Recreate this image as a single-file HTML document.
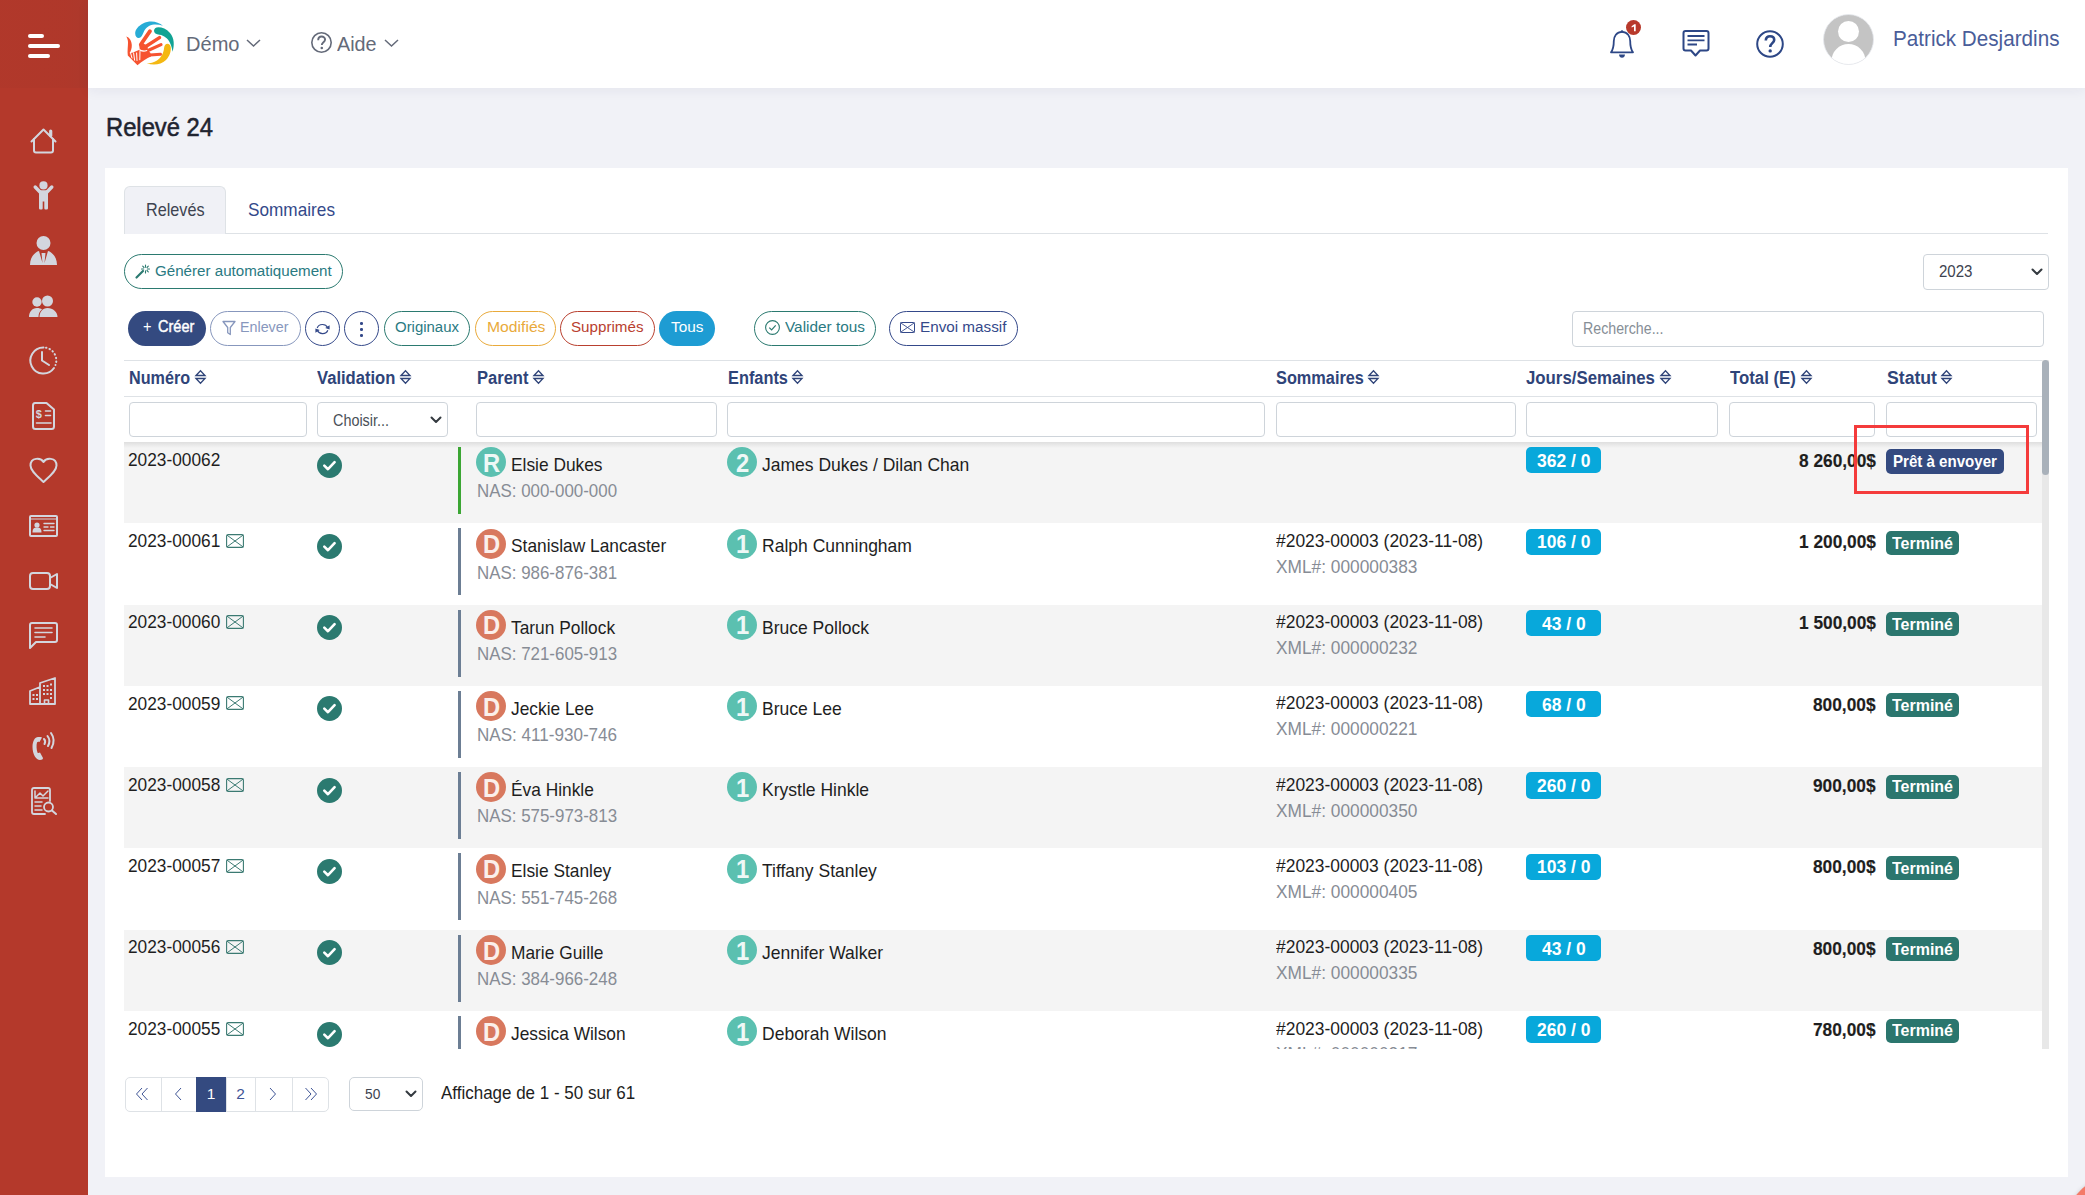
<!DOCTYPE html><html><head><meta charset="utf-8"><style>
html,body{margin:0;padding:0;}
body{width:2085px;height:1195px;overflow:hidden;position:relative;background:#f1f2f7;font-family:"Liberation Sans",sans-serif;}
svg{display:block;overflow:visible}
</style></head><body>
<div style="position:absolute;left:0px;top:0px;width:88px;height:1195px;background:#b4392b;"></div>
<div style="position:absolute;left:0px;top:0px;width:88px;height:88px;background:linear-gradient(90deg,rgba(40,20,20,0.025) 0%,rgba(40,20,20,0.03) 75%,rgba(60,60,60,0.06) 100%);"></div>
<div style="position:absolute;left:28px;top:34px;width:16px;height:4px;background:#fff;border-radius:2px;"></div>
<div style="position:absolute;left:28px;top:44px;width:32px;height:4px;background:#fff;border-radius:2px;"></div>
<div style="position:absolute;left:28px;top:54px;width:22px;height:4px;background:#fff;border-radius:2px;"></div>
<svg style="position:absolute;left:30px;top:128px;" width="27" height="26" viewBox="0 0 27 26"><path fill="none" stroke="#d3d6de" stroke-linejoin="round" stroke-linecap="round" stroke-width="2" d="M1.5 13.5 L13.5 1.5 L25.5 13.5"/><path fill="none" stroke="#d3d6de" stroke-linejoin="round" stroke-linecap="round" stroke-width="2" d="M4 11 V22.5 Q4 24.5 6 24.5 H21 Q23 24.5 23 22.5 V11"/><path fill="none" stroke="#d3d6de" stroke-linejoin="round" stroke-linecap="round" stroke-width="3.2" d="M20.7 3 V7.5"/></svg>
<svg style="position:absolute;left:33px;top:181px;" width="21" height="29" viewBox="0 0 21 29"><circle fill="#d3d6de" cx="10.5" cy="4.4" r="4.1"/><path fill="none" stroke="#d3d6de" stroke-linejoin="round" stroke-linecap="round" stroke-width="3.4" d="M2.2 6 L7 11 M18.8 6 L14 11"/><path fill="#d3d6de" d="M6 10.5 Q6 9.3 7.5 9.3 H13.5 Q15 9.3 15 10.5 V27.3 Q15 28.6 13.7 28.6 H12.4 Q11.3 28.6 11.3 27.3 V20.5 H9.7 V27.3 Q9.7 28.6 8.6 28.6 H7.3 Q6 28.6 6 27.3 Z"/></svg>
<svg style="position:absolute;left:30px;top:236px;" width="27" height="29" viewBox="0 0 27 29"><circle fill="#d3d6de" cx="13.5" cy="7" r="7"/><path fill="#d3d6de" d="M0 29 C0 21 5 16 9 15 L12.5 27 L11.5 17 H15.5 L14.5 27 L18 15 C22 16 27 21 27 29 Z"/></svg>
<svg style="position:absolute;left:29px;top:295px;" width="29" height="22" viewBox="0 0 29 22"><circle fill="#d3d6de" cx="8" cy="7" r="4.7"/><circle fill="#d3d6de" cx="18.5" cy="6" r="5.5"/><path fill="#d3d6de" d="M0 22 C0 17 3 13 8 13 C10 13 12 13.5 13 14.5 C10.5 16 9.5 19 9.5 22 Z"/><path fill="#d3d6de" d="M10.5 22 C10.5 17 13.5 13 18.5 13 C24 13 28.5 17 28.5 22 Z"/></svg>
<svg style="position:absolute;left:29px;top:346px;" width="29" height="29" viewBox="0 0 29 29"><path fill="none" stroke="#d3d6de" stroke-linejoin="round" stroke-linecap="round" stroke-width="2" d="M14.5 1.5 A13 13 0 1 0 25 22"/><path fill="none" stroke="#d3d6de" stroke-linejoin="round" stroke-linecap="round" stroke-width="2" stroke-dasharray="0.5 3.2" stroke-width="2.2" d="M17 1.7 A13 13 0 0 1 26.5 19"/><path fill="none" stroke="#d3d6de" stroke-linejoin="round" stroke-linecap="round" stroke-width="2" d="M13 6 V14.5 L20 19"/></svg>
<svg style="position:absolute;left:32px;top:402px;" width="23" height="28" viewBox="0 0 23 28"><path fill="none" stroke="#d3d6de" stroke-linejoin="round" stroke-linecap="round" stroke-width="2" d="M3 1 H14.5 L22 7.5 V24.5 Q22 27 19.5 27 H3.5 Q1 27 1 24.5 V3.5 Q1 1 3 1 Z"/><path fill="none" stroke="#d3d6de" stroke-linejoin="round" stroke-linecap="round" stroke-width="1.6" d="M13.5 9 H18.5 M13.5 13.5 H18.5 M4.5 21 H19"/><text x="6.8" y="16" font-size="11" font-weight="700" fill="#d3d6de" text-anchor="middle" font-family="Liberation Sans">$</text></svg>
<svg style="position:absolute;left:29px;top:457px;" width="29" height="26" viewBox="0 0 29 26"><path fill="none" stroke="#d3d6de" stroke-linejoin="round" stroke-linecap="round" stroke-width="2" d="M14.5 5 C12 0.5 1.5 0 1.5 8.5 C1.5 14 8 19 14.5 25 C21 19 27.5 14 27.5 8.5 C27.5 0 17 0.5 14.5 5 Z"/></svg>
<svg style="position:absolute;left:29px;top:515px;" width="29" height="22" viewBox="0 0 29 22"><rect fill="none" stroke="#d3d6de" stroke-linejoin="round" stroke-linecap="round" stroke-width="2" x="1" y="1" width="27" height="20" rx="1"/><path fill="none" stroke="#d3d6de" stroke-linejoin="round" stroke-linecap="round" stroke-width="1.2" d="M1 4 H28"/><circle fill="#d3d6de" cx="8" cy="10" r="2.6"/><path fill="#d3d6de" d="M3.5 17.5 C3.5 13.5 5 12.5 8 12.5 C11 12.5 12.5 13.5 12.5 17.5 Z"/><path fill="none" stroke="#d3d6de" stroke-linejoin="round" stroke-linecap="round" stroke-width="1.4" d="M15 8.5 H25 M15 12 H19 M21.5 12 H25 M15 15.5 H25"/></svg>
<svg style="position:absolute;left:29px;top:572px;" width="29" height="18" viewBox="0 0 29 18"><rect fill="none" stroke="#d3d6de" stroke-linejoin="round" stroke-linecap="round" stroke-width="2" x="1" y="1" width="20" height="16" rx="3"/><path fill="none" stroke="#d3d6de" stroke-linejoin="round" stroke-linecap="round" stroke-width="2" d="M21 6 L28 2 V16 L21 12"/></svg>
<svg style="position:absolute;left:29px;top:622px;" width="29" height="27" viewBox="0 0 29 27"><path fill="none" stroke="#d3d6de" stroke-linejoin="round" stroke-linecap="round" stroke-width="2" d="M3 1 H26 Q28 1 28 3 V18 Q28 20 26 20 H7 L1 26 V3 Q1 1 3 1 Z"/><path fill="none" stroke="#d3d6de" stroke-linejoin="round" stroke-linecap="round" stroke-width="1.6" d="M6 6 H23 M6 10.5 H23 M6 15 H16"/></svg>
<svg style="position:absolute;left:29px;top:677px;" width="27" height="28" viewBox="0 0 27 28"><path fill="none" stroke="#d3d6de" stroke-linejoin="round" stroke-linecap="round" stroke-width="1.8" d="M1 27 V14 L11 10 V27 M11 27 V6 L26 1 V27 Z M1 27 H26"/><path fill="none" stroke="#d3d6de" stroke-linejoin="round" stroke-linecap="round" stroke-width="1.6" d="M15.5 27 V23 H19.5 V27"/><g fill="#d3d6de"><rect x="3.5" y="17" width="2" height="2"/><rect x="7" y="17" width="2" height="2"/><rect x="3.5" y="21" width="2" height="2"/><rect x="7" y="21" width="2" height="2"/><rect x="14" y="8" width="2" height="2"/><rect x="17.5" y="8" width="2" height="2"/><rect x="21" y="6.5" width="2" height="2"/><rect x="14" y="12" width="2" height="2"/><rect x="17.5" y="12" width="2" height="2"/><rect x="21" y="12" width="2" height="2"/><rect x="14" y="16" width="2" height="2"/><rect x="17.5" y="16" width="2" height="2"/><rect x="21" y="16" width="2" height="2"/><rect x="21" y="20" width="2" height="2"/></g></svg>
<svg style="position:absolute;left:32px;top:732px;" width="23" height="28" viewBox="0 0 23 28"><path fill="#d3d6de" d="M6 5 C3 5 0.5 9 0.5 15 C0.5 22 4 28 8 28 C10 28 11 27 11 26 L8 20.5 C7 21 6 21.3 5.5 20.5 C4.5 18 4.2 13 5 10.5 C5.5 9.5 6.5 9.5 7.5 10 L10 5.5 C9.5 5 8 5 6 5 Z"/><path fill="none" stroke="#d3d6de" stroke-linejoin="round" stroke-linecap="round" stroke-width="2" d="M12 7 Q14 9 12.5 12 M15.5 4 Q19 8.5 16 14 M19 1 Q24 8 19.5 16"/></svg>
<svg style="position:absolute;left:31px;top:787px;" width="26" height="28" viewBox="0 0 26 28"><path fill="none" stroke="#d3d6de" stroke-linejoin="round" stroke-linecap="round" stroke-width="1.8" d="M14 27 H3 Q1 27 1 25 V3 Q1 1 3 1 H17 Q19 1 19 3 V14"/><path fill="none" stroke="#d3d6de" stroke-linejoin="round" stroke-linecap="round" stroke-width="1.5" d="M4 4 V11 H17 M5 10 L9 6 L12 9 L17 4 M4 15 H11 M4 19 H10 M4 23 H11"/><circle fill="none" stroke="#d3d6de" stroke-linejoin="round" stroke-linecap="round" stroke-width="1.8" cx="17.5" cy="20" r="4.5"/><path fill="none" stroke="#d3d6de" stroke-linejoin="round" stroke-linecap="round" stroke-width="2" d="M21 23.5 L25 27"/></svg>
<div style="position:absolute;left:88px;top:0px;width:1997px;height:88px;background:#fff;box-shadow:0 3px 12px rgba(30,40,80,0.06);"></div>
<svg style="position:absolute;left:125px;top:20px;" width="50" height="47" viewBox="0 0 50 47">
<path fill="#27acd6" d="M38 5.8 C33 1.5 25 0 18 3.5 C13 6 10 10 10.2 13.5 C10.3 16.5 12 18.3 14 18 C16 17.8 17 16 18.5 12.5 C20.5 8 24 5 29 4.6 C32 4.4 35 4.8 38 5.8 Z"/>
<path fill="#11a394" d="M47.5 31.8 C49.5 26 49.5 18 45 13 C41.5 9 37 7.3 33.5 7.3 C30.5 7.3 29 9 29 10.8 C29 13 31 14.3 34.5 14.8 C39 15.5 43 18.5 45 23 C46.5 26 47.2 29 47.5 31.8 Z"/>
<path fill="#f4b812" d="M21.7 43.3 C28 45.5 36 45 41 40 C45 36 46 31 45.8 27.5 C45.6 25 44 23.8 42.5 23.8 C40.5 23.8 39.3 25.5 39 28.5 C38.5 33 36.5 37.5 32 40.5 C29 42.5 25 43.3 21.7 43.3 Z"/>
<g stroke="#f65330" stroke-linecap="round" fill="none">
<path stroke-width="3.8" d="M15.8 24.5 L25 11.2"/>
<path stroke-width="3.5" d="M20 27 L34.5 17.6"/>
<path stroke-width="3.2" d="M23 30.5 L36 24.6"/>
<path stroke-width="3" d="M25 35 L35.5 34.3"/>
</g>
<path fill="#f65330" d="M1.2 16.5 C4.5 17.2 6.6 21 6.8 25 C7 28.5 5.6 31.5 4.6 33.2 L8 32.5 L14.5 29.8 C17.5 31.5 20.5 31.5 22.5 30 L25.5 33 L26 36.5 C24 37.5 21.5 38.6 19.5 40 C17 41.7 14.5 43.5 12.5 45.3 L2.8 35.5 C2.2 31 3 26.5 3 22.5 C3 20 2.3 18 1.2 16.5 Z"/>
<path fill="#f65330" d="M14.2 25.5 L17 22.5 L21 25 L23 28 L22 30.5 C19.5 31 17 30.5 14.8 29.6 Z"/>
<g stroke="#fff" stroke-width="1" stroke-linecap="round" fill="none">
<path d="M5.4 32.4 L7 38"/><path d="M8.6 33 L9.6 40.2"/><path d="M11.6 33 L12 40.5"/><path d="M15 31.2 L14.8 39.8"/>
<path stroke-width="1.1" d="M14.8 30 C17 31.4 19.5 31.6 21.8 30.6"/>
</g>
</svg>
<span style="position:absolute;left:185.50px;top:32.92px;font-size:21px;line-height:21px;font-weight:400;color:#646a79;transform:scaleX(0.9554);transform-origin:0 0;white-space:nowrap;">Démo</span>
<svg style="position:absolute;left:246px;top:39px;" width="15" height="8" viewBox="0 0 15 8"><path fill="none" stroke="#646a79" stroke-width="1.5" d="M1 1 L7.5 7 L14 1"/></svg>
<svg style="position:absolute;left:311px;top:32px;" width="21" height="21" viewBox="0 0 21 21"><circle cx="10.5" cy="10.5" r="9.7" fill="none" stroke="#646a79" stroke-width="1.6"/><path fill="none" stroke="#646a79" stroke-width="1.9" d="M7.2 8.2 C7.2 5.6 8.9 4.5 10.6 4.5 C12.6 4.5 14.1 5.8 14.1 7.6 C14.1 10.2 10.8 10.3 10.8 13"/><circle cx="10.8" cy="16" r="1.3" fill="#646a79"/></svg>
<span style="position:absolute;left:337.40px;top:32.92px;font-size:21px;line-height:21px;font-weight:400;color:#646a79;transform:scaleX(0.9417);transform-origin:0 0;white-space:nowrap;">Aide</span>
<svg style="position:absolute;left:384px;top:39px;" width="15" height="8" viewBox="0 0 15 8"><path fill="none" stroke="#646a79" stroke-width="1.5" d="M1 1 L7.5 7 L14 1"/></svg>
<svg style="position:absolute;left:1610px;top:30px;" width="24" height="28" viewBox="0 0 24 28"><path fill="none" stroke="#2d4786" stroke-width="1.8" stroke-linejoin="round" d="M12 1.8 C6.5 1.8 3.8 6.5 3.8 11 C3.8 17 2.8 20 1 22.3 H23 C21.2 20 20.2 17 20.2 11 C20.2 6.5 17.5 1.8 12 1.8 Z"/><path fill="#2d4786" d="M9 24.5 H15 C15 26.5 13.5 27.8 12 27.8 C10.5 27.8 9 26.5 9 24.5 Z"/><circle cx="12" cy="1.5" r="1.3" fill="#2d4786"/></svg>
<svg style="position:absolute;left:1626px;top:20px;" width="15" height="15" viewBox="0 0 15 15"><circle cx="7.5" cy="7.5" r="7.5" fill="#b8392b"/></svg>
<svg style="position:absolute;left:1626px;top:20px;" width="15" height="15" viewBox="0 0 15 15"><path fill="#fff" d="M5.6 6.2 L8.3 4.3 H9.7 V11.2 H8 V6.4 L5.6 7.6 Z"/></svg>
<svg style="position:absolute;left:1682px;top:30px;" width="28" height="27" viewBox="0 0 28 27"><path fill="none" stroke="#2d4786" stroke-width="2" stroke-linejoin="round" d="M3.5 1 H24.5 Q26.5 1 26.5 3 V18.5 Q26.5 20.5 24.5 20.5 H18 L13.5 25.5 L9 20.5 H3.5 Q1.5 20.5 1.5 18.5 V3 Q1.5 1 3.5 1 Z"/><path stroke="#2d4786" stroke-width="1.8" d="M5.5 6 H22.5 M5.5 10.3 H22.5 M5.5 14.5 H15"/></svg>
<svg style="position:absolute;left:1756px;top:30px;" width="28" height="28" viewBox="0 0 28 28"><circle cx="14" cy="14" r="12.8" fill="none" stroke="#2d4786" stroke-width="2"/><path fill="none" stroke="#2d4786" stroke-width="2.6" d="M9.8 10.4 C9.8 7.4 11.7 6.2 14 6.2 C16.5 6.2 18.2 7.7 18.2 9.9 C18.2 13.1 14.2 13.3 14.2 17"/><circle cx="14.2" cy="20.9" r="1.7" fill="#2d4786"/></svg>
<svg style="position:absolute;left:1823px;top:14px;" width="51" height="51" viewBox="0 0 51 51"><defs><clipPath id="avc"><circle cx="25.5" cy="25.5" r="25"/></clipPath></defs><circle cx="25.5" cy="25.5" r="25" fill="#c4c4c4"/><g clip-path="url(#avc)" fill="#fff"><circle cx="25.5" cy="17.5" r="10.5"/><ellipse cx="25.5" cy="47" rx="17" ry="17"/></g><circle cx="25.5" cy="25.5" r="25" fill="none" stroke="#e6e8ee" stroke-width="0.8"/></svg>
<span style="position:absolute;left:1892.50px;top:28.67px;font-size:21.3px;line-height:21.3px;font-weight:400;color:#4a5d99;transform:scaleX(0.9700);transform-origin:0 0;white-space:nowrap;">Patrick Desjardins</span>
<span style="position:absolute;left:106.00px;top:113.79px;font-size:26px;line-height:26px;font-weight:400;color:#1f2430;transform:scaleX(0.9137);transform-origin:0 0;white-space:nowrap;-webkit-text-stroke:0.55px #1f2430;">Relevé 24</span>
<div style="position:absolute;left:105px;top:168px;width:1963px;height:1009px;background:#fff;"></div>
<div style="position:absolute;left:124px;top:233px;width:1924px;height:1px;background:#dee2e6;"></div>
<div style="position:absolute;left:124px;top:186px;width:100px;height:47px;background:#f0f1f6;border:1px solid #dee2e6;border-bottom:none;border-radius:6px 6px 0 0;"></div>
<span style="position:absolute;left:145.50px;top:199.91px;font-size:19px;line-height:19px;font-weight:400;color:#3d4350;transform:scaleX(0.8521);transform-origin:0 0;white-space:nowrap;">Relevés</span>
<span style="position:absolute;left:248.00px;top:199.91px;font-size:19px;line-height:19px;font-weight:400;color:#34498a;transform:scaleX(0.9053);transform-origin:0 0;white-space:nowrap;">Sommaires</span>
<div style="position:absolute;left:124px;top:254px;width:217px;height:33px;border:1px solid #2b7a70;background:transparent;border-radius:17.5px;"></div>
<svg style="position:absolute;left:135px;top:264px;" width="15" height="15" viewBox="0 0 15 15"><path stroke="#2b7a70" stroke-width="2.2" stroke-linecap="round" d="M1.5 13.5 L8 7"/><g stroke="#2b7a70" stroke-width="1.1" stroke-linecap="round"><path d="M10.5 1 V3.2 M10.5 6.8 V9 M6.5 5 H8.7 M12.3 5 H14.5 M7.7 2.2 L9 3.5 M12 6.5 L13.3 7.8 M13.3 2.2 L12 3.5"/></g></svg>
<span style="position:absolute;left:154.50px;top:262.96px;font-size:15.4px;line-height:15.4px;font-weight:400;color:#2a7a82;transform:scaleX(0.9836);transform-origin:0 0;white-space:nowrap;">Générer automatiquement</span>
<div style="position:absolute;left:1923px;top:254px;width:124px;height:34px;border:1px solid #ced4da;border-radius:4px;background:#fff;"></div>
<span style="position:absolute;left:1939.00px;top:264.25px;font-size:16px;line-height:16px;font-weight:400;color:#3d4350;transform:scaleX(0.9410);transform-origin:0 0;white-space:nowrap;">2023</span>
<svg style="position:absolute;left:2031px;top:268px;" width="12" height="8" viewBox="0 0 12 8"><path fill="none" stroke="#343a40" stroke-width="2" stroke-linecap="round" stroke-linejoin="round" d="M1.5 1.5 L6 6 L10.5 1.5"/></svg>
<div style="position:absolute;left:128px;top:311px;width:78px;height:35px;background:#344a80;border-radius:17.5px;"></div>
<span style="position:absolute;left:142.50px;top:318.95px;font-size:16px;line-height:16px;font-weight:400;color:#fff;transform:scaleX(0.9091);transform-origin:0 0;white-space:nowrap;">+</span>
<span style="position:absolute;left:158.30px;top:318.92px;font-size:15.8px;line-height:15.8px;font-weight:400;color:#fff;transform:scaleX(0.9190);transform-origin:0 0;white-space:nowrap;-webkit-text-stroke:0.45px #fff;">Créer</span>
<div style="position:absolute;left:210px;top:311px;width:89px;height:33px;border:1px solid #8797bd;background:transparent;border-radius:17.5px;"></div>
<svg style="position:absolute;left:222px;top:320px;" width="14" height="16" viewBox="0 0 14 16"><path fill="none" stroke="#8797bd" stroke-width="1.3" stroke-linejoin="round" d="M1 1.5 H13 L8.3 7.5 V14.5 L5.7 12.8 V7.5 Z"/></svg>
<span style="position:absolute;left:240.00px;top:319.26px;font-size:15.4px;line-height:15.4px;font-weight:400;color:#8797bd;transform:scaleX(0.9291);transform-origin:0 0;white-space:nowrap;">Enlever</span>
<div style="position:absolute;left:305px;top:311px;width:33px;height:33px;border:1px solid #34498a;background:transparent;border-radius:17.5px;"></div>
<svg style="position:absolute;left:314px;top:322px;" width="17" height="14" viewBox="0 0 17 14"><path fill="none" stroke="#34498a" stroke-width="1.2" d="M3.2 6 A5.6 5.2 0 0 1 13.6 5.6 M13.8 8.2 A5.6 5.2 0 0 1 3.4 8.6"/><path fill="#34498a" d="M11.2 6 L15.6 7.6 L15.6 3.2 Z M5.8 8 L1.4 6.4 L1.4 10.8 Z"/></svg>
<div style="position:absolute;left:344px;top:311px;width:33px;height:33px;border:1px solid #34498a;background:transparent;border-radius:17.5px;"></div>
<div style="position:absolute;left:360.3px;top:322.3px;width:2.6px;height:2.6px;background:#34498a;border-radius:50%;"></div>
<div style="position:absolute;left:360.3px;top:328.3px;width:2.6px;height:2.6px;background:#34498a;border-radius:50%;"></div>
<div style="position:absolute;left:360.3px;top:334.3px;width:2.6px;height:2.6px;background:#34498a;border-radius:50%;"></div>
<div style="position:absolute;left:384px;top:311px;width:84px;height:33px;border:1px solid #2b7a70;background:transparent;border-radius:17.5px;"></div>
<span style="position:absolute;left:395.00px;top:319.26px;font-size:15.4px;line-height:15.4px;font-weight:400;color:#2a7a82;transform:scaleX(0.9712);transform-origin:0 0;white-space:nowrap;">Originaux</span>
<div style="position:absolute;left:475px;top:311px;width:79px;height:33px;border:1px solid #e9aa3b;background:transparent;border-radius:17.5px;"></div>
<span style="position:absolute;left:486.50px;top:319.26px;font-size:15.4px;line-height:15.4px;font-weight:400;color:#e9aa3b;transform:scaleX(1.0201);transform-origin:0 0;white-space:nowrap;">Modifiés</span>
<div style="position:absolute;left:560px;top:311px;width:93px;height:33px;border:1px solid #b9402f;background:transparent;border-radius:17.5px;"></div>
<span style="position:absolute;left:571.00px;top:319.26px;font-size:15.4px;line-height:15.4px;font-weight:400;color:#b9402f;transform:scaleX(0.9851);transform-origin:0 0;white-space:nowrap;">Supprimés</span>
<div style="position:absolute;left:659px;top:311px;width:56px;height:35px;background:#1e9cd3;border-radius:17.5px;"></div>
<span style="position:absolute;left:671.00px;top:319.26px;font-size:15.4px;line-height:15.4px;font-weight:400;color:#fff;transform:scaleX(0.9985);transform-origin:0 0;white-space:nowrap;">Tous</span>
<div style="position:absolute;left:754px;top:311px;width:120px;height:33px;border:1px solid #2b7a70;background:transparent;border-radius:17.5px;"></div>
<svg style="position:absolute;left:765px;top:320px;" width="15" height="15" viewBox="0 0 15 15"><circle cx="7.5" cy="7.5" r="6.9" fill="none" stroke="#2b7a70" stroke-width="1.1"/><path fill="none" stroke="#2b7a70" stroke-width="1.2" d="M4.3 7.6 L6.6 9.9 L10.7 5.3"/></svg>
<span style="position:absolute;left:785.00px;top:319.26px;font-size:15.4px;line-height:15.4px;font-weight:400;color:#2a7a82;transform:scaleX(0.9975);transform-origin:0 0;white-space:nowrap;">Valider tous</span>
<div style="position:absolute;left:889px;top:311px;width:127px;height:33px;border:1px solid #34498a;background:transparent;border-radius:17.5px;"></div>
<svg style="position:absolute;left:900px;top:322px;" width="15" height="11" viewBox="0 0 15 11"><rect x="0.5" y="0.5" width="14" height="10" rx="0.8" fill="none" stroke="#34498a" stroke-width="1"/><path fill="none" stroke="#34498a" stroke-width="0.9" d="M0.6 0.8 L14.4 10.2 M14.4 0.8 L0.6 10.2"/></svg>
<span style="position:absolute;left:920.00px;top:319.26px;font-size:15.4px;line-height:15.4px;font-weight:400;color:#34498a;transform:scaleX(0.9903);transform-origin:0 0;white-space:nowrap;">Envoi massif</span>
<div style="position:absolute;left:1572px;top:311px;width:470px;height:34px;border:1px solid #ced4da;border-radius:4px;background:#fff;"></div>
<span style="position:absolute;left:1583.00px;top:321.42px;font-size:15.8px;line-height:15.8px;font-weight:400;color:#868e96;transform:scaleX(0.8984);transform-origin:0 0;white-space:nowrap;">Recherche...</span>
<div style="position:absolute;left:124px;top:360px;width:1918px;height:1px;background:#dee2e6;"></div>
<div style="position:absolute;left:124px;top:396px;width:1918px;height:1px;background:#dee2e6;"></div>
<span style="position:absolute;left:129.40px;top:369.41px;font-size:18.3px;line-height:18.3px;font-weight:700;color:#2f4479;transform:scaleX(0.8850);transform-origin:0 0;white-space:nowrap;">Numéro</span>
<svg style="position:absolute;left:195.10000000000002px;top:370px;" width="11" height="14" viewBox="0 0 11 14"><path fill="none" stroke="#2f4479" stroke-width="1.3" stroke-linejoin="miter" d="M1 5.5 L5.5 0.8 L10 5.5 Z M1 8.5 L5.5 13.2 L10 8.5 Z"/></svg>
<span style="position:absolute;left:317.30px;top:369.41px;font-size:18.3px;line-height:18.3px;font-weight:700;color:#2f4479;transform:scaleX(0.9080);transform-origin:0 0;white-space:nowrap;">Validation</span>
<svg style="position:absolute;left:400.3px;top:370px;" width="11" height="14" viewBox="0 0 11 14"><path fill="none" stroke="#2f4479" stroke-width="1.3" stroke-linejoin="miter" d="M1 5.5 L5.5 0.8 L10 5.5 Z M1 8.5 L5.5 13.2 L10 8.5 Z"/></svg>
<span style="position:absolute;left:477.40px;top:369.41px;font-size:18.3px;line-height:18.3px;font-weight:700;color:#2f4479;transform:scaleX(0.9043);transform-origin:0 0;white-space:nowrap;">Parent</span>
<svg style="position:absolute;left:533.4px;top:370px;" width="11" height="14" viewBox="0 0 11 14"><path fill="none" stroke="#2f4479" stroke-width="1.3" stroke-linejoin="miter" d="M1 5.5 L5.5 0.8 L10 5.5 Z M1 8.5 L5.5 13.2 L10 8.5 Z"/></svg>
<span style="position:absolute;left:727.60px;top:369.41px;font-size:18.3px;line-height:18.3px;font-weight:700;color:#2f4479;transform:scaleX(0.8942);transform-origin:0 0;white-space:nowrap;">Enfants</span>
<svg style="position:absolute;left:792.1px;top:370px;" width="11" height="14" viewBox="0 0 11 14"><path fill="none" stroke="#2f4479" stroke-width="1.3" stroke-linejoin="miter" d="M1 5.5 L5.5 0.8 L10 5.5 Z M1 8.5 L5.5 13.2 L10 8.5 Z"/></svg>
<span style="position:absolute;left:1275.50px;top:369.41px;font-size:18.3px;line-height:18.3px;font-weight:700;color:#2f4479;transform:scaleX(0.8920);transform-origin:0 0;white-space:nowrap;">Sommaires</span>
<svg style="position:absolute;left:1368.0px;top:370px;" width="11" height="14" viewBox="0 0 11 14"><path fill="none" stroke="#2f4479" stroke-width="1.3" stroke-linejoin="miter" d="M1 5.5 L5.5 0.8 L10 5.5 Z M1 8.5 L5.5 13.2 L10 8.5 Z"/></svg>
<span style="position:absolute;left:1526.00px;top:369.41px;font-size:18.3px;line-height:18.3px;font-weight:700;color:#2f4479;transform:scaleX(0.9191);transform-origin:0 0;white-space:nowrap;">Jours/Semaines</span>
<svg style="position:absolute;left:1659.5px;top:370px;" width="11" height="14" viewBox="0 0 11 14"><path fill="none" stroke="#2f4479" stroke-width="1.3" stroke-linejoin="miter" d="M1 5.5 L5.5 0.8 L10 5.5 Z M1 8.5 L5.5 13.2 L10 8.5 Z"/></svg>
<span style="position:absolute;left:1730.00px;top:369.41px;font-size:18.3px;line-height:18.3px;font-weight:700;color:#2f4479;transform:scaleX(0.9186);transform-origin:0 0;white-space:nowrap;">Total (E)</span>
<svg style="position:absolute;left:1800.5px;top:370px;" width="11" height="14" viewBox="0 0 11 14"><path fill="none" stroke="#2f4479" stroke-width="1.3" stroke-linejoin="miter" d="M1 5.5 L5.5 0.8 L10 5.5 Z M1 8.5 L5.5 13.2 L10 8.5 Z"/></svg>
<span style="position:absolute;left:1886.50px;top:369.41px;font-size:18.3px;line-height:18.3px;font-weight:700;color:#2f4479;transform:scaleX(0.9643);transform-origin:0 0;white-space:nowrap;">Statut</span>
<svg style="position:absolute;left:1941.0px;top:370px;" width="11" height="14" viewBox="0 0 11 14"><path fill="none" stroke="#2f4479" stroke-width="1.3" stroke-linejoin="miter" d="M1 5.5 L5.5 0.8 L10 5.5 Z M1 8.5 L5.5 13.2 L10 8.5 Z"/></svg>
<div style="position:absolute;left:129.4px;top:402px;width:175.4px;height:33px;border:1px solid #ced4da;border-radius:4px;background:#fff;"></div>
<div style="position:absolute;left:476.4px;top:402px;width:238.3px;height:33px;border:1px solid #ced4da;border-radius:4px;background:#fff;"></div>
<div style="position:absolute;left:727.4px;top:402px;width:535.2px;height:33px;border:1px solid #ced4da;border-radius:4px;background:#fff;"></div>
<div style="position:absolute;left:1275.5px;top:402px;width:238.1px;height:33px;border:1px solid #ced4da;border-radius:4px;background:#fff;"></div>
<div style="position:absolute;left:1526px;top:402px;width:190.2px;height:33px;border:1px solid #ced4da;border-radius:4px;background:#fff;"></div>
<div style="position:absolute;left:1729.2px;top:402px;width:144.1px;height:33px;border:1px solid #ced4da;border-radius:4px;background:#fff;"></div>
<div style="position:absolute;left:1886.3px;top:402px;width:148.3px;height:33px;border:1px solid #ced4da;border-radius:4px;background:#fff;"></div>
<div style="position:absolute;left:317.3px;top:402px;width:128.4px;height:33px;border:1px solid #ced4da;border-radius:4px;background:#fff;"></div>
<span style="position:absolute;left:333.00px;top:412.59px;font-size:15.6px;line-height:15.6px;font-weight:400;color:#495057;transform:scaleX(0.9226);transform-origin:0 0;white-space:nowrap;">Choisir...</span>
<svg style="position:absolute;left:430px;top:416px;" width="12" height="8" viewBox="0 0 12 8"><path fill="none" stroke="#343a40" stroke-width="2" stroke-linecap="round" stroke-linejoin="round" d="M1.5 1.5 L6 6 L10.5 1.5"/></svg>
<div style="position:absolute;left:124px;top:442.0px;width:1918px;height:81.79px;background:#f4f4f4;"></div>
<div style="position:absolute;left:124px;top:523.29px;width:1918px;height:81.79px;background:#fff;"></div>
<div style="position:absolute;left:124px;top:604.58px;width:1918px;height:81.79px;background:#f4f4f4;"></div>
<div style="position:absolute;left:124px;top:685.87px;width:1918px;height:81.79px;background:#fff;"></div>
<div style="position:absolute;left:124px;top:767.16px;width:1918px;height:81.79px;background:#f4f4f4;"></div>
<div style="position:absolute;left:124px;top:848.45px;width:1918px;height:81.79px;background:#fff;"></div>
<div style="position:absolute;left:124px;top:929.74px;width:1918px;height:81.79px;background:#f4f4f4;"></div>
<div style="position:absolute;left:124px;top:1011.03px;width:1918px;height:81.79px;background:#fff;"></div>
<span style="position:absolute;left:128.40px;top:451.63px;font-size:17.8px;line-height:17.8px;font-weight:400;color:#1e1e1e;transform:scaleX(0.9726);transform-origin:0 0;white-space:nowrap;">2023-00062</span>
<svg style="position:absolute;left:317px;top:452.5px;" width="25" height="25" viewBox="0 0 25 25"><circle cx="12.5" cy="12.5" r="12.5" fill="#2b7a70"/><path fill="none" stroke="#fff" stroke-width="2.6" stroke-linecap="round" stroke-linejoin="round" d="M7.3 12.6 L11 16.2 L17.6 9.2"/></svg>
<div style="position:absolute;left:457.5px;top:447.0px;width:3.5px;height:67px;background:#3ba634;"></div>
<svg style="position:absolute;left:476px;top:447.3px;" width="30" height="30" viewBox="0 0 30 30"><circle cx="15" cy="15" r="15" fill="#5bc0b0"/></svg>
<span style="position:absolute;left:482.93px;top:450.83px;font-size:25px;line-height:25px;font-weight:700;color:#eef8f6;transform:scaleX(0.9500);transform-origin:0 0;white-space:nowrap;">R</span>
<span style="position:absolute;left:511.20px;top:456.93px;font-size:17.8px;line-height:17.8px;font-weight:400;color:#1e1e1e;transform:scaleX(0.9750);transform-origin:0 0;white-space:nowrap;">Elsie Dukes</span>
<span style="position:absolute;left:477.00px;top:483.33px;font-size:17.8px;line-height:17.8px;font-weight:400;color:#878c95;transform:scaleX(0.9508);transform-origin:0 0;white-space:nowrap;">NAS: 000-000-000</span>
<svg style="position:absolute;left:727px;top:447.3px;" width="30" height="30" viewBox="0 0 30 30"><circle cx="15" cy="15" r="15" fill="#5bc0b0"/></svg>
<span style="position:absolute;left:735.90px;top:450.83px;font-size:25px;line-height:25px;font-weight:700;color:#eef8f6;transform:scaleX(0.9500);transform-origin:0 0;white-space:nowrap;">2</span>
<span style="position:absolute;left:762.00px;top:456.93px;font-size:17.8px;line-height:17.8px;font-weight:400;color:#1e1e1e;transform:scaleX(0.9850);transform-origin:0 0;white-space:nowrap;">James Dukes / Dilan Chan</span>
<div style="position:absolute;left:1526px;top:447.3px;width:75px;height:26.2px;background:#08a8db;border-radius:5px;"></div>
<span style="position:absolute;left:1536.78px;top:452.02px;font-size:18.4px;line-height:18.4px;font-weight:700;color:#fff;transform:scaleX(0.9500);transform-origin:0 0;white-space:nowrap;">362 / 0</span>
<span style="position:absolute;left:1798.60px;top:451.82px;font-size:18.4px;line-height:18.4px;font-weight:700;color:#1e1e1e;transform:scaleX(0.9407);transform-origin:0 0;white-space:nowrap;-webkit-text-stroke:0.15px #1e1e1e;">8 260,00$</span>
<div style="position:absolute;left:1886px;top:449.3px;width:118px;height:25px;background:#344a80;border-radius:5px;"></div>
<span style="position:absolute;left:1893.00px;top:452.61px;font-size:17px;line-height:17px;font-weight:700;color:#fff;transform:scaleX(0.8874);transform-origin:0 0;white-space:nowrap;">Prêt à envoyer</span>
<span style="position:absolute;left:128.40px;top:532.92px;font-size:17.8px;line-height:17.8px;font-weight:400;color:#1e1e1e;transform:scaleX(0.9726);transform-origin:0 0;white-space:nowrap;">2023-00061</span>
<svg style="position:absolute;left:226px;top:533.79px;" width="18" height="14" viewBox="0 0 18 14"><rect x="0.6" y="0.6" width="16.8" height="12.8" rx="1.5" fill="none" stroke="#3b7a72" stroke-width="1.1"/><path fill="none" stroke="#3b7a72" stroke-width="1" d="M0.8 1 L17.2 13 M17.2 1 L0.8 13"/></svg>
<svg style="position:absolute;left:317px;top:533.79px;" width="25" height="25" viewBox="0 0 25 25"><circle cx="12.5" cy="12.5" r="12.5" fill="#2b7a70"/><path fill="none" stroke="#fff" stroke-width="2.6" stroke-linecap="round" stroke-linejoin="round" d="M7.3 12.6 L11 16.2 L17.6 9.2"/></svg>
<div style="position:absolute;left:457.5px;top:528.29px;width:3.5px;height:67px;background:#6c7e94;"></div>
<svg style="position:absolute;left:476px;top:528.59px;" width="30" height="30" viewBox="0 0 30 30"><circle cx="15" cy="15" r="15" fill="#d8785e"/></svg>
<span style="position:absolute;left:482.93px;top:532.12px;font-size:25px;line-height:25px;font-weight:700;color:#fbefeb;transform:scaleX(0.9500);transform-origin:0 0;white-space:nowrap;">D</span>
<span style="position:absolute;left:511.20px;top:538.22px;font-size:17.8px;line-height:17.8px;font-weight:400;color:#1e1e1e;transform:scaleX(0.9750);transform-origin:0 0;white-space:nowrap;">Stanislaw Lancaster</span>
<span style="position:absolute;left:477.00px;top:564.62px;font-size:17.8px;line-height:17.8px;font-weight:400;color:#878c95;transform:scaleX(0.9508);transform-origin:0 0;white-space:nowrap;">NAS: 986-876-381</span>
<svg style="position:absolute;left:727px;top:528.59px;" width="30" height="30" viewBox="0 0 30 30"><circle cx="15" cy="15" r="15" fill="#5bc0b0"/></svg>
<span style="position:absolute;left:735.90px;top:532.12px;font-size:25px;line-height:25px;font-weight:700;color:#eef8f6;transform:scaleX(0.9500);transform-origin:0 0;white-space:nowrap;">1</span>
<span style="position:absolute;left:762.00px;top:538.22px;font-size:17.8px;line-height:17.8px;font-weight:400;color:#1e1e1e;transform:scaleX(0.9850);transform-origin:0 0;white-space:nowrap;">Ralph Cunningham</span>
<span style="position:absolute;left:1276.20px;top:532.82px;font-size:17.8px;line-height:17.8px;font-weight:400;color:#1e1e1e;transform:scaleX(0.9804);transform-origin:0 0;white-space:nowrap;">#2023-00003 (2023-11-08)</span>
<span style="position:absolute;left:1276.20px;top:558.72px;font-size:17.8px;line-height:17.8px;font-weight:400;color:#878c95;transform:scaleX(0.9732);transform-origin:0 0;white-space:nowrap;">XML#: 000000383</span>
<div style="position:absolute;left:1526px;top:528.59px;width:75px;height:26.2px;background:#08a8db;border-radius:5px;"></div>
<span style="position:absolute;left:1536.78px;top:533.31px;font-size:18.4px;line-height:18.4px;font-weight:700;color:#fff;transform:scaleX(0.9500);transform-origin:0 0;white-space:nowrap;">106 / 0</span>
<span style="position:absolute;left:1798.60px;top:533.11px;font-size:18.4px;line-height:18.4px;font-weight:700;color:#1e1e1e;transform:scaleX(0.9407);transform-origin:0 0;white-space:nowrap;-webkit-text-stroke:0.15px #1e1e1e;">1 200,00$</span>
<div style="position:absolute;left:1886px;top:530.89px;width:73px;height:24px;background:#2b766e;border-radius:5px;"></div>
<span style="position:absolute;left:1892.00px;top:534.50px;font-size:17px;line-height:17px;font-weight:700;color:#fff;transform:scaleX(0.9406);transform-origin:0 0;white-space:nowrap;">Terminé</span>
<span style="position:absolute;left:128.40px;top:614.21px;font-size:17.8px;line-height:17.8px;font-weight:400;color:#1e1e1e;transform:scaleX(0.9726);transform-origin:0 0;white-space:nowrap;">2023-00060</span>
<svg style="position:absolute;left:226px;top:615.08px;" width="18" height="14" viewBox="0 0 18 14"><rect x="0.6" y="0.6" width="16.8" height="12.8" rx="1.5" fill="none" stroke="#3b7a72" stroke-width="1.1"/><path fill="none" stroke="#3b7a72" stroke-width="1" d="M0.8 1 L17.2 13 M17.2 1 L0.8 13"/></svg>
<svg style="position:absolute;left:317px;top:615.08px;" width="25" height="25" viewBox="0 0 25 25"><circle cx="12.5" cy="12.5" r="12.5" fill="#2b7a70"/><path fill="none" stroke="#fff" stroke-width="2.6" stroke-linecap="round" stroke-linejoin="round" d="M7.3 12.6 L11 16.2 L17.6 9.2"/></svg>
<div style="position:absolute;left:457.5px;top:609.58px;width:3.5px;height:67px;background:#6c7e94;"></div>
<svg style="position:absolute;left:476px;top:609.88px;" width="30" height="30" viewBox="0 0 30 30"><circle cx="15" cy="15" r="15" fill="#d8785e"/></svg>
<span style="position:absolute;left:482.93px;top:613.41px;font-size:25px;line-height:25px;font-weight:700;color:#fbefeb;transform:scaleX(0.9500);transform-origin:0 0;white-space:nowrap;">D</span>
<span style="position:absolute;left:511.20px;top:619.51px;font-size:17.8px;line-height:17.8px;font-weight:400;color:#1e1e1e;transform:scaleX(0.9750);transform-origin:0 0;white-space:nowrap;">Tarun Pollock</span>
<span style="position:absolute;left:477.00px;top:645.91px;font-size:17.8px;line-height:17.8px;font-weight:400;color:#878c95;transform:scaleX(0.9508);transform-origin:0 0;white-space:nowrap;">NAS: 721-605-913</span>
<svg style="position:absolute;left:727px;top:609.88px;" width="30" height="30" viewBox="0 0 30 30"><circle cx="15" cy="15" r="15" fill="#5bc0b0"/></svg>
<span style="position:absolute;left:735.90px;top:613.41px;font-size:25px;line-height:25px;font-weight:700;color:#eef8f6;transform:scaleX(0.9500);transform-origin:0 0;white-space:nowrap;">1</span>
<span style="position:absolute;left:762.00px;top:619.51px;font-size:17.8px;line-height:17.8px;font-weight:400;color:#1e1e1e;transform:scaleX(0.9850);transform-origin:0 0;white-space:nowrap;">Bruce Pollock</span>
<span style="position:absolute;left:1276.20px;top:614.11px;font-size:17.8px;line-height:17.8px;font-weight:400;color:#1e1e1e;transform:scaleX(0.9804);transform-origin:0 0;white-space:nowrap;">#2023-00003 (2023-11-08)</span>
<span style="position:absolute;left:1276.20px;top:640.01px;font-size:17.8px;line-height:17.8px;font-weight:400;color:#878c95;transform:scaleX(0.9732);transform-origin:0 0;white-space:nowrap;">XML#: 000000232</span>
<div style="position:absolute;left:1526px;top:609.88px;width:75px;height:26.2px;background:#08a8db;border-radius:5px;"></div>
<span style="position:absolute;left:1541.63px;top:614.60px;font-size:18.4px;line-height:18.4px;font-weight:700;color:#fff;transform:scaleX(0.9500);transform-origin:0 0;white-space:nowrap;">43 / 0</span>
<span style="position:absolute;left:1798.60px;top:614.40px;font-size:18.4px;line-height:18.4px;font-weight:700;color:#1e1e1e;transform:scaleX(0.9407);transform-origin:0 0;white-space:nowrap;-webkit-text-stroke:0.15px #1e1e1e;">1 500,00$</span>
<div style="position:absolute;left:1886px;top:612.18px;width:73px;height:24px;background:#2b766e;border-radius:5px;"></div>
<span style="position:absolute;left:1892.00px;top:615.79px;font-size:17px;line-height:17px;font-weight:700;color:#fff;transform:scaleX(0.9406);transform-origin:0 0;white-space:nowrap;">Terminé</span>
<span style="position:absolute;left:128.40px;top:695.50px;font-size:17.8px;line-height:17.8px;font-weight:400;color:#1e1e1e;transform:scaleX(0.9726);transform-origin:0 0;white-space:nowrap;">2023-00059</span>
<svg style="position:absolute;left:226px;top:696.37px;" width="18" height="14" viewBox="0 0 18 14"><rect x="0.6" y="0.6" width="16.8" height="12.8" rx="1.5" fill="none" stroke="#3b7a72" stroke-width="1.1"/><path fill="none" stroke="#3b7a72" stroke-width="1" d="M0.8 1 L17.2 13 M17.2 1 L0.8 13"/></svg>
<svg style="position:absolute;left:317px;top:696.37px;" width="25" height="25" viewBox="0 0 25 25"><circle cx="12.5" cy="12.5" r="12.5" fill="#2b7a70"/><path fill="none" stroke="#fff" stroke-width="2.6" stroke-linecap="round" stroke-linejoin="round" d="M7.3 12.6 L11 16.2 L17.6 9.2"/></svg>
<div style="position:absolute;left:457.5px;top:690.87px;width:3.5px;height:67px;background:#6c7e94;"></div>
<svg style="position:absolute;left:476px;top:691.17px;" width="30" height="30" viewBox="0 0 30 30"><circle cx="15" cy="15" r="15" fill="#d8785e"/></svg>
<span style="position:absolute;left:482.93px;top:694.70px;font-size:25px;line-height:25px;font-weight:700;color:#fbefeb;transform:scaleX(0.9500);transform-origin:0 0;white-space:nowrap;">D</span>
<span style="position:absolute;left:511.20px;top:700.80px;font-size:17.8px;line-height:17.8px;font-weight:400;color:#1e1e1e;transform:scaleX(0.9750);transform-origin:0 0;white-space:nowrap;">Jeckie Lee</span>
<span style="position:absolute;left:477.00px;top:727.20px;font-size:17.8px;line-height:17.8px;font-weight:400;color:#878c95;transform:scaleX(0.9596);transform-origin:0 0;white-space:nowrap;">NAS: 411-930-746</span>
<svg style="position:absolute;left:727px;top:691.17px;" width="30" height="30" viewBox="0 0 30 30"><circle cx="15" cy="15" r="15" fill="#5bc0b0"/></svg>
<span style="position:absolute;left:735.90px;top:694.70px;font-size:25px;line-height:25px;font-weight:700;color:#eef8f6;transform:scaleX(0.9500);transform-origin:0 0;white-space:nowrap;">1</span>
<span style="position:absolute;left:762.00px;top:700.80px;font-size:17.8px;line-height:17.8px;font-weight:400;color:#1e1e1e;transform:scaleX(0.9850);transform-origin:0 0;white-space:nowrap;">Bruce Lee</span>
<span style="position:absolute;left:1276.20px;top:695.40px;font-size:17.8px;line-height:17.8px;font-weight:400;color:#1e1e1e;transform:scaleX(0.9804);transform-origin:0 0;white-space:nowrap;">#2023-00003 (2023-11-08)</span>
<span style="position:absolute;left:1276.20px;top:721.30px;font-size:17.8px;line-height:17.8px;font-weight:400;color:#878c95;transform:scaleX(0.9732);transform-origin:0 0;white-space:nowrap;">XML#: 000000221</span>
<div style="position:absolute;left:1526px;top:691.17px;width:75px;height:26.2px;background:#08a8db;border-radius:5px;"></div>
<span style="position:absolute;left:1541.63px;top:695.89px;font-size:18.4px;line-height:18.4px;font-weight:700;color:#fff;transform:scaleX(0.9500);transform-origin:0 0;white-space:nowrap;">68 / 0</span>
<span style="position:absolute;left:1813.04px;top:695.69px;font-size:18.4px;line-height:18.4px;font-weight:700;color:#1e1e1e;transform:scaleX(0.9407);transform-origin:0 0;white-space:nowrap;-webkit-text-stroke:0.15px #1e1e1e;">800,00$</span>
<div style="position:absolute;left:1886px;top:693.47px;width:73px;height:24px;background:#2b766e;border-radius:5px;"></div>
<span style="position:absolute;left:1892.00px;top:697.08px;font-size:17px;line-height:17px;font-weight:700;color:#fff;transform:scaleX(0.9406);transform-origin:0 0;white-space:nowrap;">Terminé</span>
<span style="position:absolute;left:128.40px;top:776.79px;font-size:17.8px;line-height:17.8px;font-weight:400;color:#1e1e1e;transform:scaleX(0.9726);transform-origin:0 0;white-space:nowrap;">2023-00058</span>
<svg style="position:absolute;left:226px;top:777.66px;" width="18" height="14" viewBox="0 0 18 14"><rect x="0.6" y="0.6" width="16.8" height="12.8" rx="1.5" fill="none" stroke="#3b7a72" stroke-width="1.1"/><path fill="none" stroke="#3b7a72" stroke-width="1" d="M0.8 1 L17.2 13 M17.2 1 L0.8 13"/></svg>
<svg style="position:absolute;left:317px;top:777.66px;" width="25" height="25" viewBox="0 0 25 25"><circle cx="12.5" cy="12.5" r="12.5" fill="#2b7a70"/><path fill="none" stroke="#fff" stroke-width="2.6" stroke-linecap="round" stroke-linejoin="round" d="M7.3 12.6 L11 16.2 L17.6 9.2"/></svg>
<div style="position:absolute;left:457.5px;top:772.16px;width:3.5px;height:67px;background:#6c7e94;"></div>
<svg style="position:absolute;left:476px;top:772.46px;" width="30" height="30" viewBox="0 0 30 30"><circle cx="15" cy="15" r="15" fill="#d8785e"/></svg>
<span style="position:absolute;left:482.93px;top:775.99px;font-size:25px;line-height:25px;font-weight:700;color:#fbefeb;transform:scaleX(0.9500);transform-origin:0 0;white-space:nowrap;">D</span>
<span style="position:absolute;left:511.20px;top:782.09px;font-size:17.8px;line-height:17.8px;font-weight:400;color:#1e1e1e;transform:scaleX(0.9750);transform-origin:0 0;white-space:nowrap;">Éva Hinkle</span>
<span style="position:absolute;left:477.00px;top:808.49px;font-size:17.8px;line-height:17.8px;font-weight:400;color:#878c95;transform:scaleX(0.9508);transform-origin:0 0;white-space:nowrap;">NAS: 575-973-813</span>
<svg style="position:absolute;left:727px;top:772.46px;" width="30" height="30" viewBox="0 0 30 30"><circle cx="15" cy="15" r="15" fill="#5bc0b0"/></svg>
<span style="position:absolute;left:735.90px;top:775.99px;font-size:25px;line-height:25px;font-weight:700;color:#eef8f6;transform:scaleX(0.9500);transform-origin:0 0;white-space:nowrap;">1</span>
<span style="position:absolute;left:762.00px;top:782.09px;font-size:17.8px;line-height:17.8px;font-weight:400;color:#1e1e1e;transform:scaleX(0.9850);transform-origin:0 0;white-space:nowrap;">Krystle Hinkle</span>
<span style="position:absolute;left:1276.20px;top:776.69px;font-size:17.8px;line-height:17.8px;font-weight:400;color:#1e1e1e;transform:scaleX(0.9804);transform-origin:0 0;white-space:nowrap;">#2023-00003 (2023-11-08)</span>
<span style="position:absolute;left:1276.20px;top:802.59px;font-size:17.8px;line-height:17.8px;font-weight:400;color:#878c95;transform:scaleX(0.9732);transform-origin:0 0;white-space:nowrap;">XML#: 000000350</span>
<div style="position:absolute;left:1526px;top:772.46px;width:75px;height:26.2px;background:#08a8db;border-radius:5px;"></div>
<span style="position:absolute;left:1536.78px;top:777.18px;font-size:18.4px;line-height:18.4px;font-weight:700;color:#fff;transform:scaleX(0.9500);transform-origin:0 0;white-space:nowrap;">260 / 0</span>
<span style="position:absolute;left:1813.04px;top:776.98px;font-size:18.4px;line-height:18.4px;font-weight:700;color:#1e1e1e;transform:scaleX(0.9407);transform-origin:0 0;white-space:nowrap;-webkit-text-stroke:0.15px #1e1e1e;">900,00$</span>
<div style="position:absolute;left:1886px;top:774.76px;width:73px;height:24px;background:#2b766e;border-radius:5px;"></div>
<span style="position:absolute;left:1892.00px;top:778.37px;font-size:17px;line-height:17px;font-weight:700;color:#fff;transform:scaleX(0.9406);transform-origin:0 0;white-space:nowrap;">Terminé</span>
<span style="position:absolute;left:128.40px;top:858.08px;font-size:17.8px;line-height:17.8px;font-weight:400;color:#1e1e1e;transform:scaleX(0.9726);transform-origin:0 0;white-space:nowrap;">2023-00057</span>
<svg style="position:absolute;left:226px;top:858.95px;" width="18" height="14" viewBox="0 0 18 14"><rect x="0.6" y="0.6" width="16.8" height="12.8" rx="1.5" fill="none" stroke="#3b7a72" stroke-width="1.1"/><path fill="none" stroke="#3b7a72" stroke-width="1" d="M0.8 1 L17.2 13 M17.2 1 L0.8 13"/></svg>
<svg style="position:absolute;left:317px;top:858.95px;" width="25" height="25" viewBox="0 0 25 25"><circle cx="12.5" cy="12.5" r="12.5" fill="#2b7a70"/><path fill="none" stroke="#fff" stroke-width="2.6" stroke-linecap="round" stroke-linejoin="round" d="M7.3 12.6 L11 16.2 L17.6 9.2"/></svg>
<div style="position:absolute;left:457.5px;top:853.45px;width:3.5px;height:67px;background:#6c7e94;"></div>
<svg style="position:absolute;left:476px;top:853.75px;" width="30" height="30" viewBox="0 0 30 30"><circle cx="15" cy="15" r="15" fill="#d8785e"/></svg>
<span style="position:absolute;left:482.93px;top:857.28px;font-size:25px;line-height:25px;font-weight:700;color:#fbefeb;transform:scaleX(0.9500);transform-origin:0 0;white-space:nowrap;">D</span>
<span style="position:absolute;left:511.20px;top:863.38px;font-size:17.8px;line-height:17.8px;font-weight:400;color:#1e1e1e;transform:scaleX(0.9750);transform-origin:0 0;white-space:nowrap;">Elsie Stanley</span>
<span style="position:absolute;left:477.00px;top:889.78px;font-size:17.8px;line-height:17.8px;font-weight:400;color:#878c95;transform:scaleX(0.9508);transform-origin:0 0;white-space:nowrap;">NAS: 551-745-268</span>
<svg style="position:absolute;left:727px;top:853.75px;" width="30" height="30" viewBox="0 0 30 30"><circle cx="15" cy="15" r="15" fill="#5bc0b0"/></svg>
<span style="position:absolute;left:735.90px;top:857.28px;font-size:25px;line-height:25px;font-weight:700;color:#eef8f6;transform:scaleX(0.9500);transform-origin:0 0;white-space:nowrap;">1</span>
<span style="position:absolute;left:762.00px;top:863.38px;font-size:17.8px;line-height:17.8px;font-weight:400;color:#1e1e1e;transform:scaleX(0.9850);transform-origin:0 0;white-space:nowrap;">Tiffany Stanley</span>
<span style="position:absolute;left:1276.20px;top:857.98px;font-size:17.8px;line-height:17.8px;font-weight:400;color:#1e1e1e;transform:scaleX(0.9804);transform-origin:0 0;white-space:nowrap;">#2023-00003 (2023-11-08)</span>
<span style="position:absolute;left:1276.20px;top:883.88px;font-size:17.8px;line-height:17.8px;font-weight:400;color:#878c95;transform:scaleX(0.9732);transform-origin:0 0;white-space:nowrap;">XML#: 000000405</span>
<div style="position:absolute;left:1526px;top:853.75px;width:75px;height:26.2px;background:#08a8db;border-radius:5px;"></div>
<span style="position:absolute;left:1536.78px;top:858.47px;font-size:18.4px;line-height:18.4px;font-weight:700;color:#fff;transform:scaleX(0.9500);transform-origin:0 0;white-space:nowrap;">103 / 0</span>
<span style="position:absolute;left:1813.04px;top:858.27px;font-size:18.4px;line-height:18.4px;font-weight:700;color:#1e1e1e;transform:scaleX(0.9407);transform-origin:0 0;white-space:nowrap;-webkit-text-stroke:0.15px #1e1e1e;">800,00$</span>
<div style="position:absolute;left:1886px;top:856.05px;width:73px;height:24px;background:#2b766e;border-radius:5px;"></div>
<span style="position:absolute;left:1892.00px;top:859.66px;font-size:17px;line-height:17px;font-weight:700;color:#fff;transform:scaleX(0.9406);transform-origin:0 0;white-space:nowrap;">Terminé</span>
<span style="position:absolute;left:128.40px;top:939.37px;font-size:17.8px;line-height:17.8px;font-weight:400;color:#1e1e1e;transform:scaleX(0.9726);transform-origin:0 0;white-space:nowrap;">2023-00056</span>
<svg style="position:absolute;left:226px;top:940.24px;" width="18" height="14" viewBox="0 0 18 14"><rect x="0.6" y="0.6" width="16.8" height="12.8" rx="1.5" fill="none" stroke="#3b7a72" stroke-width="1.1"/><path fill="none" stroke="#3b7a72" stroke-width="1" d="M0.8 1 L17.2 13 M17.2 1 L0.8 13"/></svg>
<svg style="position:absolute;left:317px;top:940.24px;" width="25" height="25" viewBox="0 0 25 25"><circle cx="12.5" cy="12.5" r="12.5" fill="#2b7a70"/><path fill="none" stroke="#fff" stroke-width="2.6" stroke-linecap="round" stroke-linejoin="round" d="M7.3 12.6 L11 16.2 L17.6 9.2"/></svg>
<div style="position:absolute;left:457.5px;top:934.74px;width:3.5px;height:67px;background:#6c7e94;"></div>
<svg style="position:absolute;left:476px;top:935.04px;" width="30" height="30" viewBox="0 0 30 30"><circle cx="15" cy="15" r="15" fill="#d8785e"/></svg>
<span style="position:absolute;left:482.93px;top:938.57px;font-size:25px;line-height:25px;font-weight:700;color:#fbefeb;transform:scaleX(0.9500);transform-origin:0 0;white-space:nowrap;">D</span>
<span style="position:absolute;left:511.20px;top:944.67px;font-size:17.8px;line-height:17.8px;font-weight:400;color:#1e1e1e;transform:scaleX(0.9750);transform-origin:0 0;white-space:nowrap;">Marie Guille</span>
<span style="position:absolute;left:477.00px;top:971.07px;font-size:17.8px;line-height:17.8px;font-weight:400;color:#878c95;transform:scaleX(0.9508);transform-origin:0 0;white-space:nowrap;">NAS: 384-966-248</span>
<svg style="position:absolute;left:727px;top:935.04px;" width="30" height="30" viewBox="0 0 30 30"><circle cx="15" cy="15" r="15" fill="#5bc0b0"/></svg>
<span style="position:absolute;left:735.90px;top:938.57px;font-size:25px;line-height:25px;font-weight:700;color:#eef8f6;transform:scaleX(0.9500);transform-origin:0 0;white-space:nowrap;">1</span>
<span style="position:absolute;left:762.00px;top:944.67px;font-size:17.8px;line-height:17.8px;font-weight:400;color:#1e1e1e;transform:scaleX(0.9850);transform-origin:0 0;white-space:nowrap;">Jennifer Walker</span>
<span style="position:absolute;left:1276.20px;top:939.27px;font-size:17.8px;line-height:17.8px;font-weight:400;color:#1e1e1e;transform:scaleX(0.9804);transform-origin:0 0;white-space:nowrap;">#2023-00003 (2023-11-08)</span>
<span style="position:absolute;left:1276.20px;top:965.17px;font-size:17.8px;line-height:17.8px;font-weight:400;color:#878c95;transform:scaleX(0.9732);transform-origin:0 0;white-space:nowrap;">XML#: 000000335</span>
<div style="position:absolute;left:1526px;top:935.04px;width:75px;height:26.2px;background:#08a8db;border-radius:5px;"></div>
<span style="position:absolute;left:1541.63px;top:939.76px;font-size:18.4px;line-height:18.4px;font-weight:700;color:#fff;transform:scaleX(0.9500);transform-origin:0 0;white-space:nowrap;">43 / 0</span>
<span style="position:absolute;left:1813.04px;top:939.56px;font-size:18.4px;line-height:18.4px;font-weight:700;color:#1e1e1e;transform:scaleX(0.9407);transform-origin:0 0;white-space:nowrap;-webkit-text-stroke:0.15px #1e1e1e;">800,00$</span>
<div style="position:absolute;left:1886px;top:937.34px;width:73px;height:24px;background:#2b766e;border-radius:5px;"></div>
<span style="position:absolute;left:1892.00px;top:940.95px;font-size:17px;line-height:17px;font-weight:700;color:#fff;transform:scaleX(0.9406);transform-origin:0 0;white-space:nowrap;">Terminé</span>
<span style="position:absolute;left:128.40px;top:1020.66px;font-size:17.8px;line-height:17.8px;font-weight:400;color:#1e1e1e;transform:scaleX(0.9726);transform-origin:0 0;white-space:nowrap;">2023-00055</span>
<svg style="position:absolute;left:226px;top:1021.53px;" width="18" height="14" viewBox="0 0 18 14"><rect x="0.6" y="0.6" width="16.8" height="12.8" rx="1.5" fill="none" stroke="#3b7a72" stroke-width="1.1"/><path fill="none" stroke="#3b7a72" stroke-width="1" d="M0.8 1 L17.2 13 M17.2 1 L0.8 13"/></svg>
<svg style="position:absolute;left:317px;top:1021.53px;" width="25" height="25" viewBox="0 0 25 25"><circle cx="12.5" cy="12.5" r="12.5" fill="#2b7a70"/><path fill="none" stroke="#fff" stroke-width="2.6" stroke-linecap="round" stroke-linejoin="round" d="M7.3 12.6 L11 16.2 L17.6 9.2"/></svg>
<div style="position:absolute;left:457.5px;top:1016.03px;width:3.5px;height:67px;background:#6c7e94;"></div>
<svg style="position:absolute;left:476px;top:1016.33px;" width="30" height="30" viewBox="0 0 30 30"><circle cx="15" cy="15" r="15" fill="#d8785e"/></svg>
<span style="position:absolute;left:482.93px;top:1019.86px;font-size:25px;line-height:25px;font-weight:700;color:#fbefeb;transform:scaleX(0.9500);transform-origin:0 0;white-space:nowrap;">D</span>
<span style="position:absolute;left:511.20px;top:1025.96px;font-size:17.8px;line-height:17.8px;font-weight:400;color:#1e1e1e;transform:scaleX(0.9750);transform-origin:0 0;white-space:nowrap;">Jessica Wilson</span>
<span style="position:absolute;left:477.00px;top:1052.36px;font-size:17.8px;line-height:17.8px;font-weight:400;color:#878c95;transform:scaleX(0.9508);transform-origin:0 0;white-space:nowrap;">NAS: 000-000-000</span>
<svg style="position:absolute;left:727px;top:1016.33px;" width="30" height="30" viewBox="0 0 30 30"><circle cx="15" cy="15" r="15" fill="#5bc0b0"/></svg>
<span style="position:absolute;left:735.90px;top:1019.86px;font-size:25px;line-height:25px;font-weight:700;color:#eef8f6;transform:scaleX(0.9500);transform-origin:0 0;white-space:nowrap;">1</span>
<span style="position:absolute;left:762.00px;top:1025.96px;font-size:17.8px;line-height:17.8px;font-weight:400;color:#1e1e1e;transform:scaleX(0.9850);transform-origin:0 0;white-space:nowrap;">Deborah Wilson</span>
<span style="position:absolute;left:1276.20px;top:1020.56px;font-size:17.8px;line-height:17.8px;font-weight:400;color:#1e1e1e;transform:scaleX(0.9804);transform-origin:0 0;white-space:nowrap;">#2023-00003 (2023-11-08)</span>
<span style="position:absolute;left:1276.20px;top:1046.46px;font-size:17.8px;line-height:17.8px;font-weight:400;color:#878c95;transform:scaleX(0.9732);transform-origin:0 0;white-space:nowrap;">XML#: 000000317</span>
<div style="position:absolute;left:1526px;top:1016.33px;width:75px;height:26.2px;background:#08a8db;border-radius:5px;"></div>
<span style="position:absolute;left:1536.78px;top:1021.05px;font-size:18.4px;line-height:18.4px;font-weight:700;color:#fff;transform:scaleX(0.9500);transform-origin:0 0;white-space:nowrap;">260 / 0</span>
<span style="position:absolute;left:1813.04px;top:1020.85px;font-size:18.4px;line-height:18.4px;font-weight:700;color:#1e1e1e;transform:scaleX(0.9407);transform-origin:0 0;white-space:nowrap;-webkit-text-stroke:0.15px #1e1e1e;">780,00$</span>
<div style="position:absolute;left:1886px;top:1018.63px;width:73px;height:24px;background:#2b766e;border-radius:5px;"></div>
<span style="position:absolute;left:1892.00px;top:1022.24px;font-size:17px;line-height:17px;font-weight:700;color:#fff;transform:scaleX(0.9406);transform-origin:0 0;white-space:nowrap;">Terminé</span>
<div style="position:absolute;left:124px;top:442px;width:1918px;height:6px;background:linear-gradient(rgba(0,0,0,0.09),rgba(0,0,0,0));"></div>
<div style="position:absolute;left:124px;top:1049px;width:1925px;height:128px;background:#fff;"></div>
<div style="position:absolute;left:2042px;top:360px;width:7px;height:689px;background:#e8e8e8;"></div>
<div style="position:absolute;left:2042px;top:360px;width:7px;height:115px;background:#a9b1ba;border-radius:4px;"></div>
<div style="position:absolute;left:1854px;top:425px;width:169px;height:63px;border:3px solid #f43b3b;"></div>
<div style="position:absolute;left:124.5px;top:1077px;width:202px;height:33px;border:1px solid #dee2e6;border-radius:5px;background:#fff;"></div>
<div style="position:absolute;left:160.6px;top:1077px;width:1px;height:35px;background:#dee2e6;"></div>
<div style="position:absolute;left:255px;top:1077px;width:1px;height:35px;background:#dee2e6;"></div>
<div style="position:absolute;left:291.5px;top:1077px;width:1px;height:35px;background:#dee2e6;"></div>
<div style="position:absolute;left:196px;top:1077px;width:30px;height:35px;background:#344a80;"></div>
<div style="position:absolute;left:225.5px;top:1077px;width:1px;height:35px;background:#dee2e6;"></div>
<svg style="position:absolute;left:135px;top:1087px;" width="14" height="14" viewBox="0 0 14 14"><path fill="none" stroke="#3f5596" stroke-width="1" d="M7 1 L1.5 7 L7 13 M12.5 1 L7 7 L12.5 13"/></svg>
<svg style="position:absolute;left:174px;top:1087px;" width="8" height="14" viewBox="0 0 8 14"><path fill="none" stroke="#3f5596" stroke-width="1" d="M7 1 L1.5 7 L7 13"/></svg>
<span style="position:absolute;left:206.70px;top:1085.98px;font-size:15.5px;line-height:15.5px;font-weight:400;color:#fff;transform:scaleX(1.0000);transform-origin:0 0;white-space:nowrap;">1</span>
<span style="position:absolute;left:236.20px;top:1085.98px;font-size:15.5px;line-height:15.5px;font-weight:400;color:#3f5596;transform:scaleX(1.0000);transform-origin:0 0;white-space:nowrap;">2</span>
<svg style="position:absolute;left:269px;top:1087px;" width="8" height="14" viewBox="0 0 8 14"><path fill="none" stroke="#3f5596" stroke-width="1" d="M1 1 L6.5 7 L1 13"/></svg>
<svg style="position:absolute;left:304px;top:1087px;" width="14" height="14" viewBox="0 0 14 14"><path fill="none" stroke="#3f5596" stroke-width="1" d="M1.5 1 L7 7 L1.5 13 M7 1 L12.5 7 L7 13"/></svg>
<div style="position:absolute;left:348.5px;top:1076.5px;width:72px;height:32.5px;border:1px solid #ced4da;border-radius:5px;background:#fff;"></div>
<span style="position:absolute;left:364.80px;top:1086.18px;font-size:15.5px;line-height:15.5px;font-weight:400;color:#3d4350;transform:scaleX(0.8870);transform-origin:0 0;white-space:nowrap;">50</span>
<svg style="position:absolute;left:405px;top:1090px;" width="12" height="8" viewBox="0 0 12 8"><path fill="none" stroke="#343a40" stroke-width="2" stroke-linecap="round" stroke-linejoin="round" d="M1.5 1.5 L6 6 L10.5 1.5"/></svg>
<span style="position:absolute;left:441.00px;top:1083.67px;font-size:18.7px;line-height:18.7px;font-weight:400;color:#1e1e1e;transform:scaleX(0.9083);transform-origin:0 0;white-space:nowrap;">Affichage de 1 - 50 sur 61</span>
<div style="position:absolute;left:2064px;top:1174px;width:112px;height:112px;background:#f47a68;border-radius:50%;box-shadow:0 0 4px rgba(0,0,0,0.15);"></div>
</body></html>
